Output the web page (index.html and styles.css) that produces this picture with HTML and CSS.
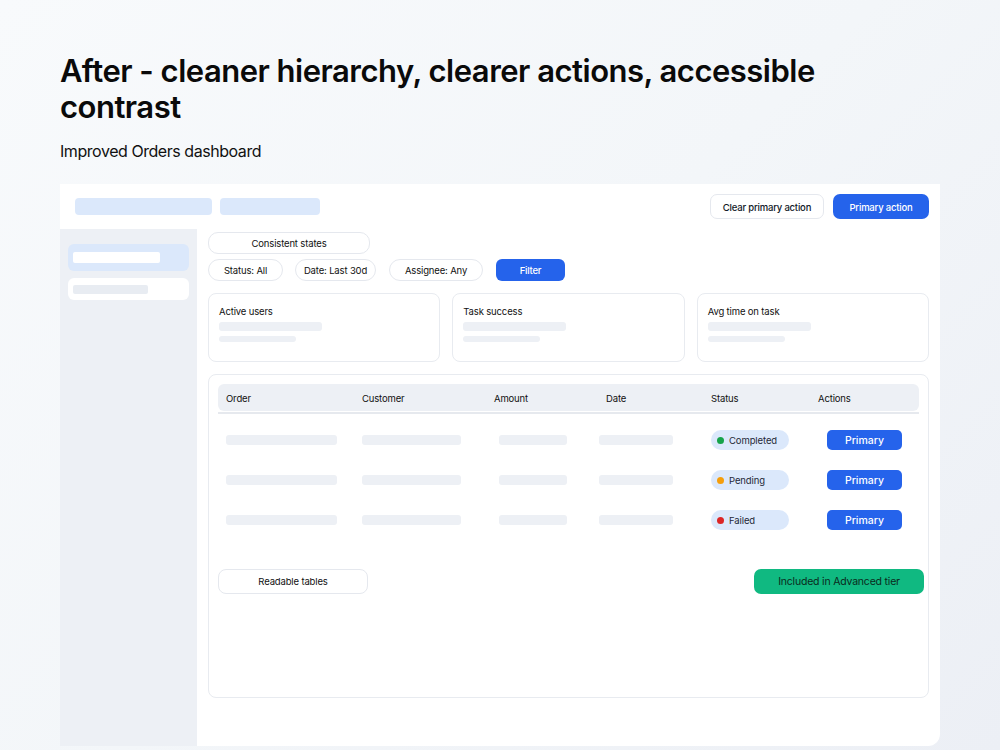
FILE: index.html
```html
<!DOCTYPE html>
<html lang="en">
<head>
  <meta charset="UTF-8">
  <meta name="viewport" content="width=device-width, initial-scale=1.0">
  <link rel="stylesheet" href="styles.css">
</head>
<body>
  <header class="intro">
    <h1>After - cleaner hierarchy, clearer actions, accessible contrast</h1>
    <p>Improved Orders dashboard</p>
  </header>

  <!-- Dashboard frame -->
  <section class="frame">
    <div class="topbar">
      <div class="crumbs">
        <span class="sk sk-blue sk-wide"></span>
        <span class="sk sk-blue sk-short"></span>
      </div>
      <div class="top-actions">
        <button class="btn btn-ghost">Clear primary action</button>
        <button class="btn btn-primary">Primary action</button>
      </div>
    </div>

    <div class="body">
      <aside class="sidebar">
        <div class="side-item active"><span class="bar"></span></div>
        <div class="side-item"><span class="bar"></span></div>
      </aside>

      <main class="content">
        <div class="note">Consistent states</div>
        <div class="filters">
          <span class="chip chip-status">Status: All</span>
          <span class="chip chip-date">Date: Last 30d</span>
          <span class="chip chip-assignee">Assignee: Any</span>
          <button class="btn btn-primary btn-filter">Filter</button>
        </div>

        <div class="kpis">
          <div class="kpi">
            <div class="kpi-title">Active users</div>
            <span class="kpi-bar"></span>
            <span class="kpi-bar short"></span>
          </div>
          <div class="kpi">
            <div class="kpi-title">Task success</div>
            <span class="kpi-bar"></span>
            <span class="kpi-bar short"></span>
          </div>
          <div class="kpi">
            <div class="kpi-title">Avg time on task</div>
            <span class="kpi-bar"></span>
            <span class="kpi-bar short"></span>
          </div>
        </div>

        <div class="table-card">
          <div class="thead-wrap">
            <div class="thead">
              <span>Order</span>
              <span>Customer</span>
              <span>Amount</span>
              <span>Date</span>
              <span>Status</span>
              <span>Actions</span>
            </div>
          </div>

          <div class="rows">
            <div class="row">
              <span class="cell-bar c-order"></span>
              <span class="cell-bar c-customer"></span>
              <span class="cell-bar c-amount"></span>
              <span class="cell-bar c-date"></span>
              <span class="status"><i class="dot green"></i>Completed</span>
              <button class="btn btn-primary btn-row">Primary</button>
            </div>
            <div class="row">
              <span class="cell-bar c-order"></span>
              <span class="cell-bar c-customer"></span>
              <span class="cell-bar c-amount"></span>
              <span class="cell-bar c-date"></span>
              <span class="status"><i class="dot amber"></i>Pending</span>
              <button class="btn btn-primary btn-row">Primary</button>
            </div>
            <div class="row">
              <span class="cell-bar c-order"></span>
              <span class="cell-bar c-customer"></span>
              <span class="cell-bar c-amount"></span>
              <span class="cell-bar c-date"></span>
              <span class="status"><i class="dot red"></i>Failed</span>
              <button class="btn btn-primary btn-row">Primary</button>
            </div>
          </div>

          <div class="table-foot">
            <span class="note note-table">Readable tables</span>
            <span class="tier">Included in Advanced tier</span>
          </div>
        </div>
      </main>
    </div>
  </section>
</body>
</html>
```

FILE: styles.css
```css
/* Page */
html, body {
  margin: 0;
  padding: 0;
}
body {
  width: 1000px;
  height: 750px;
  overflow: hidden;
  font-family: Inter, "Liberation Sans", sans-serif;
  color: #0f172a;
  background: linear-gradient(135deg, #f8fafc 0%, #f3f6f9 50%, #eceff5 100%);
}
.intro {
  padding: 53px 60px 0 60px;
}
.intro h1 {
  margin: 0;
  font-size: 31px;
  line-height: 36px;
  font-weight: 600;
  letter-spacing: -0.5px;
  color: #0a0a0a;
  max-width: 800px;
}
.intro p {
  margin: 16px 0 0 0;
  font-size: 16px;
  line-height: 20px;
  letter-spacing: -0.45px;
  color: #111;
}

/* Frame */
.frame {
  margin: 23px 0 0 60px;
  width: 880px;
  height: 562px;
  background: #fff;
  border-radius: 0 0 12px 0;
  display: flex;
  flex-direction: column;
}
.topbar {
  height: 45px;
  box-sizing: border-box;
  padding: 10px 11px 10px 15px;
  display: flex;
  justify-content: space-between;
  align-items: center;
}
.crumbs {
  display: flex;
  gap: 8px;
  align-items: center;
}
.sk {
  display: block;
  height: 17px;
  border-radius: 4px;
}
.sk-blue { background: #dbe8fb; }
.sk-wide { width: 137px; }
.sk-short { width: 100px; }
.top-actions {
  display: flex;
  gap: 9px;
}

/* Buttons */
.btn {
  font-family: inherit;
  border: none;
  cursor: pointer;
  font-size: 9.5px;
  font-weight: 500;
  letter-spacing: -0.2px;
  border-radius: 7px;
  height: 25px;
  padding: 1px 0 0 0;
}
.btn-ghost {
  width: 114px;
  background: #fff;
  border: 1px solid #e5e8ee;
  color: #111827;
}
.btn-primary {
  width: 96px;
  background: #2563eb;
  color: #fff;
}

/* Body */
.body {
  flex: 1;
  display: flex;
}
.sidebar {
  width: 137px;
  box-sizing: border-box;
  background: #edf0f5;
  padding: 15px 8px 0 8px;
  display: flex;
  flex-direction: column;
  gap: 7px;
}
.side-item {
  height: 22px;
  border-radius: 6px;
  background: #fff;
  display: flex;
  align-items: center;
  padding-left: 5px;
}
.side-item .bar {
  display: block;
  width: 75px;
  height: 9px;
  border-radius: 2px;
  background: #e8ecf2;
}
.side-item.active {
  height: 27px;
  background: #dbe8fb;
}
.side-item.active .bar {
  width: 87px;
  height: 11px;
  background: #fff;
}

.content {
  flex: 1;
  padding: 3px 11px 0 11px;
  display: flex;
  flex-direction: column;
}
.note {
  width: 162px;
  height: 22px;
  box-sizing: border-box;
  border: 1px solid #e5e8ee;
  border-radius: 10px;
  background: #fff;
  font-size: 9.5px;
  letter-spacing: -0.15px;
  display: flex;
  align-items: center;
  justify-content: center;
  color: #111;
}
.filters {
  margin-top: 5px;
  display: flex;
  align-items: center;
}
.chip {
  height: 22px;
  box-sizing: border-box;
  border: 1px solid #e5e8ee;
  border-radius: 11px;
  font-size: 9.5px;
  letter-spacing: -0.15px;
  display: flex;
  align-items: center;
  justify-content: center;
  color: #111;
  background: #fff;
}
.chip-status { width: 75px; margin-right: 12px; }
.chip-date { width: 81px; margin-right: 13px; }
.chip-assignee { width: 94px; margin-right: 13px; }
.btn-filter {
  width: 69px;
  height: 22px;
  border-radius: 6px;
}

/* KPI cards */
.kpis {
  margin-top: 12px;
  display: grid;
  grid-template-columns: 1fr 1fr 1fr;
  gap: 12px;
  height: 69px;
}
.kpi {
  border: 1px solid #e8ebf0;
  border-radius: 8px;
  padding: 11px 10px 0 10px;
  display: flex;
  flex-direction: column;
}
.kpi-title {
  font-size: 9.5px;
  letter-spacing: -0.15px;
  line-height: 12px;
  padding-top: 1px;
  margin-bottom: -1px;
  color: #111;
}
.kpi-bar {
  display: block;
  margin-top: 5px;
  width: 103px;
  height: 9px;
  border-radius: 3px;
  background: #edf0f5;
}
.kpi-bar.short {
  width: 77px;
  height: 6px;
}

/* Table */
.table-card {
  margin-top: 12px;
  height: 324px;
  box-sizing: border-box;
  border: 1px solid #e8ebf0;
  border-radius: 8px;
  padding: 9px 9px 0 9px;
}
.thead-wrap {
  border-bottom: 2px solid #e6e9ee;
  padding-bottom: 1px;
}
.thead {
  height: 27px;
  background: #edf0f5;
  border-radius: 6px;
  display: grid;
  grid-template-columns: 136px 132px 112px 105px 107px 1fr;
  align-items: center;
  font-size: 9.5px;
  letter-spacing: -0.15px;
  color: #111;
}
.thead span {
  padding: 1px 0 0 8px;
}
.rows {
  padding-top: 6px;
}
.row {
  height: 40px;
  display: grid;
  grid-template-columns: 136px 132px 112px 105px 107px 1fr;
  align-items: center;
}
.cell-bar {
  display: block;
  height: 10px;
  border-radius: 3px;
  background: #edf0f5;
}
.c-order { width: 111px; margin-left: 8px; }
.c-customer { width: 99px; margin-left: 8px; }
.c-amount { width: 68px; margin-left: 13px; }
.c-date { width: 74px; margin-left: 1px; }
.status {
  margin-left: 8px;
  width: 78px;
  height: 20px;
  border-radius: 10px;
  background: #dbe8fb;
  display: flex;
  align-items: center;
  font-size: 9.5px;
  letter-spacing: -0.1px;
  color: #1f2937;
}
.dot {
  width: 7px;
  height: 7px;
  border-radius: 50%;
  margin: 0 5px 0 6px;
}
.dot.green { background: #16a34a; }
.dot.amber { background: #f59e0b; }
.dot.red { background: #dc2626; }
.btn-row {
  margin-left: 17px;
  width: 75px;
  height: 20px;
  border-radius: 5px;
  font-size: 10.5px;
  letter-spacing: 0;
}
.table-foot {
  margin-top: 29px;
  display: flex;
  justify-content: space-between;
  align-items: center;
  margin-right: -5px;
}
.note-table {
  width: 150px;
  height: 25px;
  border-radius: 8px;
}
.tier {
  width: 170px;
  height: 25px;
  border-radius: 7px;
  background: #10b981;
  color: #0b2a1c;
  font-size: 10.5px;
  letter-spacing: -0.2px;
  display: flex;
  align-items: center;
  justify-content: center;
}
```
